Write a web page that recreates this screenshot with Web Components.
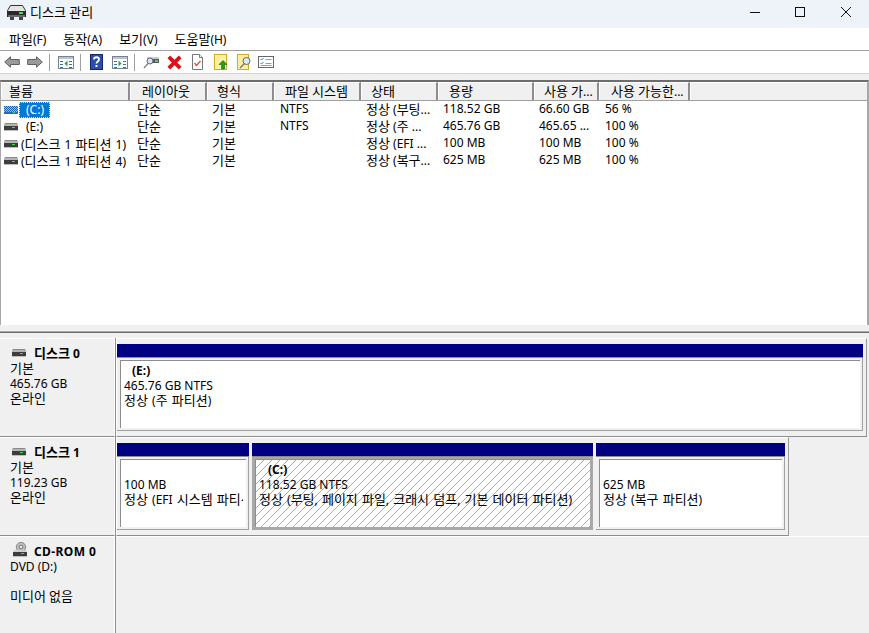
<!DOCTYPE html>
<html lang="ko"><head><meta charset="utf-8"><title>디스크 관리</title>
<style>
html,body{margin:0;padding:0;background:#f0f0f0}
body{font:12px/15px "Noto Sans","Noto Sans CJK KR",sans-serif;color:#000}
.k{font-style:normal;font-size:13px}
</style></head><body>
<dm-app>
  <dm-titlebar slot="top"><i class="k">디스크 관리</i></dm-titlebar>
  <dm-menubar><span><i class="k">파일</i>(F)</span><span><i class="k">동작</i>(A)</span><span><i class="k">보기</i>(V)</span><span><i class="k">도움말</i>(H)</span></dm-menubar>
  <dm-toolbar></dm-toolbar>
  <dm-table></dm-table>
  <dm-disks>
    <dm-disk name="디스크 0" lines="기본|465.76 GB|온라인" frame-width="751">
      <dm-part style="width:746px" title-text="(E:)" l1="465.76 GB NTFS" l2="정상 (주 파티션)"></dm-part>
    </dm-disk>
    <dm-disk name="디스크 1" lines="기본|119.23 GB|온라인" frame-width="673">
      <dm-part style="width:132px" l1="100 MB" l2="정상 (EFI 시스템 파티션)"></dm-part>
      <dm-part style="width:341px" selected title-text="(C:)" l1="118.52 GB NTFS" l2="정상 (부팅, 페이지 파일, 크래시 덤프, 기본 데이터 파티션)"></dm-part>
      <dm-part style="width:189px" l1="625 MB" l2="정상 (복구 파티션)"></dm-part>
    </dm-disk>
    <dm-disk name="CD-ROM 0" cd lines="DVD (D:)||미디어 없음"></dm-disk>
  </dm-disks>
</dm-app>
<script>
const K=s=>String(s).replace(/[가-힣]+/g,m=>`<i>${m}</i>`);
const KS=`i{font-style:normal;font-size:13px}`;
const driveIcon=()=>`<svg width="14" height="8" viewBox="0 0 14 8"><path d="M1 0h12l1 1v2H0V1z" fill="#b4b4b4"/><rect x="1" y="0" width="12" height="1" fill="#8a8a8a"/><rect x="0" y="3" width="14" height="4" fill="#3d3d3d"/><rect x="8" y="4" width="3" height="1" fill="#3fe04f"/><rect x="0" y="7" width="14" height="1" fill="#bdbdbd"/></svg>`;
const stripedIcon=`<svg width="14" height="8" viewBox="0 0 14 8"><defs><pattern id="st" width="2" height="2" patternUnits="userSpaceOnUse"><rect width="2" height="2" fill="#9cc0ea"/><rect width="1" height="1" fill="#1b5fae"/><rect x="1" y="1" width="1" height="1" fill="#1b5fae"/></pattern></defs><rect width="14" height="8" fill="url(#st)"/><rect y="6" width="14" height="2" fill="#2a6bb8"/><rect x="9" y="6" width="2" height="1" fill="#3fe04f"/></svg>`;
const cdIcon=`<svg width="16" height="15" viewBox="0 0 16 15"><circle cx="9" cy="5" r="4.700" fill="#bdbdbd" stroke="#8a8a8a"/><circle cx="9" cy="5" r="1.800" fill="#eee" stroke="#777"/><path d="M2 8h12l1 2H1z" fill="#cfcfcf"/><rect x="1" y="10" width="14" height="4" fill="#3d3d3d"/><rect x="9" y="11" width="3" height="1" fill="#3fe04f"/><rect x="1" y="14" width="14" height="1" fill="#bdbdbd"/></svg>`;
const titleIcon=`<svg width="19" height="15" viewBox="0 0 19 15"><path d="M3.500 .500h12l3 5v1H.5v-1z" fill="#e4e4e4" stroke="#333"/><rect x="0" y="6" width="19" height="6" fill="#2a2a2a"/><rect x="12" y="7" width="4" height="2" fill="#3fe04f"/><rect x="1" y="10" width="17" height="2" fill="#6a6a6a"/><rect x="3" y="12" width="4" height="3" fill="#444"/><rect x="12" y="12" width="4" height="3" fill="#444"/></svg>`;
class Base extends HTMLElement{
  constructor(){super();this.attachShadow({mode:'open'});}
  html(s){this.shadowRoot.innerHTML=s;}
}
customElements.define('dm-app',class extends Base{connectedCallback(){this.html(`<style>:host{display:flex;flex-direction:column;width:869px;height:633px;overflow:hidden;background:#f0f0f0}</style><slot name="top"></slot><slot></slot>`);}});
customElements.define('dm-titlebar',class extends Base{connectedCallback(){this.html(`<style>
:host{display:flex;align-items:center;height:28px;box-sizing:border-box;padding-bottom:4px;background:#eef3f9;flex:none}
.i{margin:0 4px 0 7px;display:flex}
.t{flex:1;font-size:12px}
.w{display:flex;align-items:center;margin-right:18px}
svg{display:block}
</style><span class="i">${titleIcon}</span><span class="t"><slot></slot></span>
<span class="w">
<svg width="10" height="10" viewBox="0 0 10 10"><path d="M0 5.500h10" stroke="#111"/></svg>
<svg style="margin-left:35px" width="10" height="10" viewBox="0 0 10 10"><rect x=".5" y=".5" width="9" height="9" fill="none" stroke="#111"/></svg>
<svg style="margin-left:36px" width="10" height="10" viewBox="0 0 10 10"><path d="M0 0l10 10M10 0L0 10" stroke="#111" stroke-width="1"/></svg>
</span>`);}});
customElements.define('dm-menubar',class extends Base{connectedCallback(){this.html(`<style>
:host{display:flex;align-items:center;gap:17px;height:22px;padding-left:9px;background:#fff;border-bottom:1px solid #a0a0a0;flex:none;font-size:12px}
</style><slot></slot>`);}});
customElements.define('dm-toolbar',class extends Base{connectedCallback(){
const side='<path d="M2 5h3v1H2zM2 8h3v1H2zM2 11h3v1H2zM11 5h3v1h-3zM11 8h3v1h-3zM11 11h3v1h-3z" fill="#3a6ea5"/>';
const win=(inner)=>`<svg width="16" height="13" viewBox="0 0 16 13"><rect x=".5" y=".5" width="15" height="12" fill="#fff" stroke="#74838f"/><rect x="1" y="1" width="14" height="2" fill="#b8c4d0"/>${inner}</svg>`;
const arrow=(d)=>`<svg width="16" height="12" viewBox="0 0 16 12"><path d="${d}" fill="#9a9a9a" stroke="#5f5f5f"/></svg>`;
const g=n=>`<span style="width:${n}px;flex:none"></span>`;
this.html(`<style>
:host{display:flex;align-items:center;height:22px;box-sizing:content-box;background:#fff;border-bottom:1px solid #d4d4d4;flex:none;padding-left:4px}
svg{display:block;flex:none}
.s{width:1px;height:17px;background:#a0a0a0;flex:none}
</style>
${arrow('M.7 6L6.500.8V3.500h8.800v5H6.500v2.700z')}${g(7)}
${arrow('M15.300 6L9.500.8V3.500H.7v5h8.800v2.700z')}${g(6)}<span class="s"></span>${g(8)}
${win(side+'<path d="M9.500 4.500v6L6.500 7.500z" fill="#2aa52a"/>')}${g(6)}<span class="s"></span>${g(9)}
<svg width="13" height="16" viewBox="0 0 13 16"><rect x=".5" y=".5" width="12" height="15" fill="#2b4bb5" stroke="#16266e"/><path d="M4 5.500C4 2.500 9 2.500 9 5.500C9 7.500 6.500 7.500 6.500 9.500" fill="none" stroke="#fff" stroke-width="1.800"/><rect x="5.500" y="11" width="2" height="2" fill="#fff"/></svg>${g(9)}
${win(side+'<path d="M6.500 4.500v6l3-3z" fill="#2aa52a"/>')}${g(6)}<span class="s"></span>${g(8)}
<svg width="16" height="13" viewBox="0 0 16 13"><path d="M4 1h11l1 2v4H4z" fill="#555"/><rect x="4" y="1" width="12" height="2" fill="#ccc"/><rect x="12" y="4" width="3" height="2" fill="#3fe04f"/><circle cx="7" cy="5" r="3" fill="#cde6f5" stroke="#667"/><path d="M5 7.500L1 12" stroke="#888" stroke-width="1.500"/></svg>${g(8)}
<svg width="15" height="15" viewBox="0 0 15 15"><path d="M1.800 1.800l11.400 11.400M13.200 1.800L1.800 13.200" stroke="#d8131b" stroke-width="3.800"/></svg>${g(10)}
<svg width="11" height="16" viewBox="0 0 11 16"><path d="M.5.500h7l3 3v12H.5z" fill="#fff" stroke="#777"/><path d="M7.500.500v3h3" fill="#eee" stroke="#777"/><path d="M2.500 9l2 2.500L8.500 7" fill="none" stroke="#e0532b" stroke-width="1.400"/></svg>${g(11)}
<svg width="14" height="16" viewBox="0 0 14 16"><rect x=".5" y=".5" width="12" height="15" fill="#fdf0a0" stroke="#d7a72a"/><path d="M9 6.500l4 4h-2.500V15h-3v-4.500H5z" fill="#1aa51a" stroke="#0b6b0b" stroke-width=".6"/></svg>${g(9)}
<svg width="14" height="16" viewBox="0 0 14 16"><rect x=".5" y=".5" width="11" height="15" fill="#fdf0a0" stroke="#d7a72a"/><circle cx="9.500" cy="7" r="3.500" fill="#dcecf7" stroke="#666"/><path d="M7 10L3 14" stroke="#777" stroke-width="1.500"/></svg>${g(7)}
<svg width="16" height="12" viewBox="0 0 16 12"><rect x=".5" y=".5" width="15" height="11" fill="#fff" stroke="#666"/><path d="M2.500 3l1 1 2-2M2.500 7l1 1 2-2" fill="none" stroke="#2a7fd0"/><path d="M7.500 3.500h6M7.500 7.500h6M2.500 9.500h11" stroke="#999"/></svg>
`);}});
const cols=[129,77,67,87,77,96,65,91,179];
const heads=[['볼륨',7],['레이아웃',11],['형식',9],['파일 시스템',10],['상태',9],['용량',10],['사용 가...',9],['사용 가능한...',11],['',0]];
const rows=[
 ['(C:)','단순','기본','NTFS','정상 (부팅...','118.52 GB','66.60 GB','56 %'],
 ['(E:)','단순','기본','NTFS','정상 (주 ...','465.76 GB','465.65 ...','100 %'],
 ['(디스크 1 파티션 1)','단순','기본','','정상 (EFI ...','100 MB','100 MB','100 %'],
 ['(디스크 1 파티션 4)','단순','기본','','정상 (복구...','625 MB','625 MB','100 %'],
];
const pads=[0,7,5,6,5,5,5,6];
customElements.define('dm-table',class extends Base{connectedCallback(){
const gt=cols.map(c=>c+'px').join(' ');
this.html(`<style>${KS}
:host{display:block;flex:none;margin-top:6px;border-top:2px solid #6d6d6d;background:#fff;height:245px;overflow:hidden;border-right:2px solid #a8a8a8;box-sizing:border-box;border-left:1px solid #a8a8a8}
.h{display:grid;grid-template-columns:${gt};height:18px;background:#f0f0f0;border-bottom:1px solid #a0a0a0}
.h span{box-sizing:border-box;border-right:2px solid #8d8d8d;border-left:1px solid #fff;border-top:1px solid #fff;line-height:16px;white-space:nowrap}
.h span:last-child{border-right:none}
.r{display:grid;grid-template-columns:${gt};height:17px;line-height:16px}
.r span{white-space:nowrap}
.n{display:flex;align-items:center}
.n svg{margin-left:3px;margin-right:1px;flex:none;display:block}
.n b{font-weight:400;padding:0 6px 0 7px;display:block;height:16px;line-height:16px}
.n b.sel{background:#0078d7;color:#fff;outline:1px dotted #ffd9a0;outline-offset:-1px}
.n b.tight{padding-left:2px;padding-right:0;word-spacing:1px}
</style>
<div class="h">${heads.map(([t,p])=>`<span style="padding-left:${p}px">${K(t)}</span>`).join('')}</div>
${rows.map((r,i)=>`<div class="r"><span class="n">${i==0?stripedIcon:driveIcon()}<b class="${i==0?'sel':i>1?'tight':''}">${K(r[0])}</b></span>${r.slice(1).map((c,j)=>`<span style="padding-left:${pads[j+1]}px">${K(c)}</span>`).join('')}</div>`).join('')}
`);}});
customElements.define('dm-disks',class extends Base{connectedCallback(){this.html(`<style>:host{display:block;flex:1;background:#f0f0f0;margin-top:6px;border-top:1px solid #a8a8a8;min-height:0}.line{height:1px;background:#6d6d6d}.gap{height:5px}</style><div class="line"></div><div class="gap"></div><slot></slot>`);}});
customElements.define('dm-disk',class extends Base{connectedCallback(){
const ls=(this.getAttribute('lines')||'').split('|');
const cd=this.hasAttribute('cd');
const fw=this.getAttribute('frame-width');
this.html(`<style>${KS}
:host{display:flex;height:${cd?97:99}px;box-sizing:border-box;background:#f0f0f0}
.l{width:115px;flex:none;box-sizing:border-box;border-top:1px solid #fff;border-right:1px solid #fff;${cd?'':'border-bottom:1px solid #8d8d8d;'}padding:0 0 0 10px}
.nm{display:flex;align-items:center;height:15px;margin-top:7px;margin-left:2px;font-weight:700;gap:8px}
.nm svg{flex:none;display:block;margin-top:${cd?'-5px':'-2px'}}
.nm span{${cd?'margin-left:-2px;letter-spacing:.4px':''}}
.sep{width:1px;flex:none;background:#8d8d8d}
.rt{flex:1;min-width:0;display:flex;flex-direction:column}
.f{box-sizing:border-box;height:100%;display:flex;width:${fw?fw+'px':'auto'};border-top:1px solid #fff;border-left:1px solid #fff;border-right:1px solid #9a9a9a;border-bottom:1px solid #8d8d8d;padding:5px 0 5px 0}
.e{height:100%;border-top:1px solid #fff}
.t{height:15px;white-space:pre}
</style>
<div class="l"><div class="nm">${cd?cdIcon:driveIcon()}<span>${K(this.getAttribute('name'))}</span></div>${ls.map(x=>`<div class="t">${K(x)}</div>`).join('')}</div>
<div class="sep"></div>
<div class="rt">${cd?'<div class="e"></div>':`<div class="f"><slot></slot></div>`}</div>`);}});
customElements.define('dm-part',class extends Base{connectedCallback(){
const sel=this.hasAttribute('selected');
const tt=this.getAttribute('title-text')||'';
this.html(`<style>${KS}
:host{display:flex;flex-direction:column;box-sizing:border-box;min-width:0;margin-right:3px;flex:none}
.bar{height:13px;background:#000080;flex:none;border-bottom:1px solid #8d8d8d}
.w{flex:1;min-height:0;display:flex;box-sizing:border-box;${sel?'background:#a8a8a8;padding:2px 3px 3px 3px':'padding:2px 2px 2px 3px;border-right:1px solid #a0a0a0;border-bottom:1px solid #a0a0a0'}}
.bx{flex:1;min-width:0;box-sizing:border-box;border-top:1px solid #8d8d8d;border-left:1px solid #8d8d8d;padding:2px 3px 0 3px;background:${sel?'repeating-linear-gradient(-45deg,#a9a9a9 0 1px,#fff 1px 5.660px)':'#fff'}}
.c{overflow:hidden;white-space:nowrap;height:48px}
.t{height:15px}
.st{word-spacing:1px}
.b{font-weight:700;padding-left:${sel?9:8}px}
</style><div class="bar"></div><div class="w"><div class="bx"><div class="c"><div class="t b">${tt}</div><div class="t">${K(this.getAttribute('l1'))}</div><div class="t st">${K(this.getAttribute('l2'))}</div></div></div></div>`);}});
</script>
</body></html>
